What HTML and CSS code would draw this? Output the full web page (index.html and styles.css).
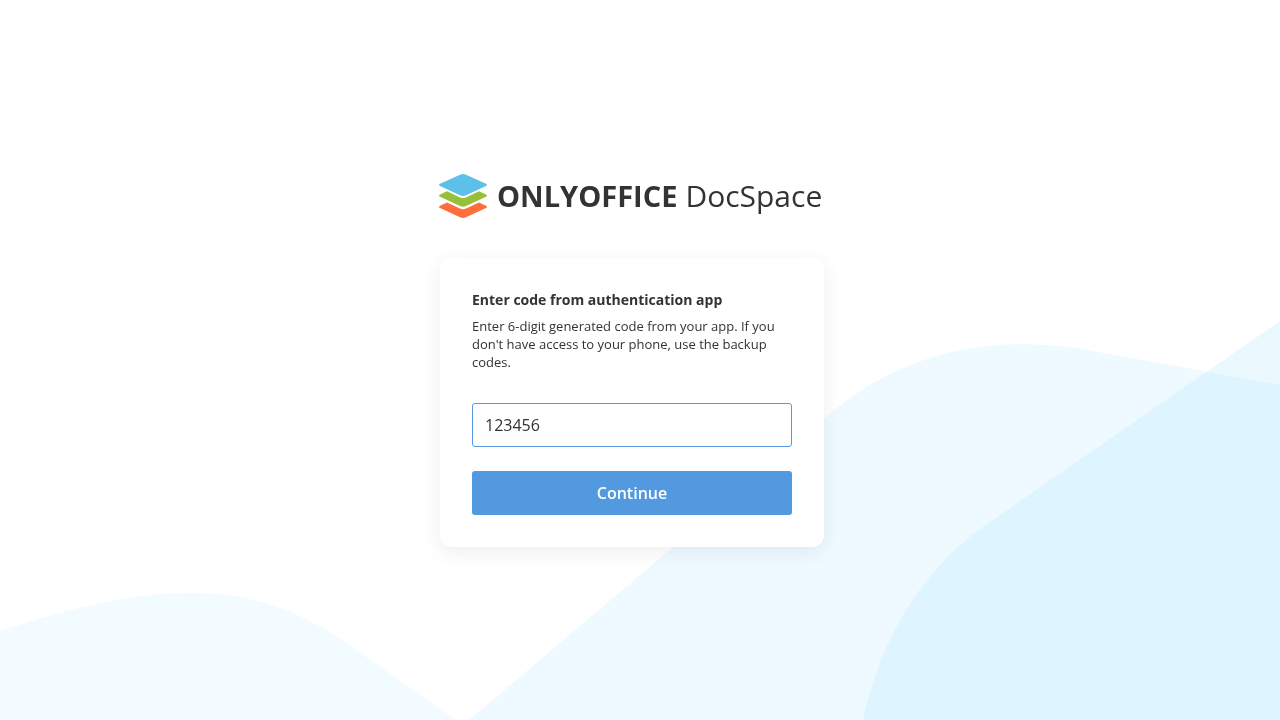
FILE: index.html
```html
<!DOCTYPE html>
<html lang="en">
<head>
<meta charset="utf-8">
<meta name="viewport" content="width=device-width, initial-scale=1">
<title>ONLYOFFICE DocSpace</title>
<link rel="stylesheet" href="styles.css">
</head>
<body class="page">
<svg class="backdrop" viewBox="0 0 1280 720" preserveAspectRatio="xMidYMax slice" aria-hidden="true">
  <path class="wave-left" d="M0 631C78 606 131 593 192 593C246 593 292 607 342 640L456 720H0Z"/>
  <path class="wave-center" d="M469 720L824 419C890 360 974 334 1076 348L1280 385V720Z"/>
  <path class="wave-right" d="M863 720C880 637 925 567 984 526L1280 321V720Z"/>
</svg>
<main class="auth">
  <div class="logo">
    <svg class="logo-mark" viewBox="0 0 48 44" aria-hidden="true">
      <path fill="#ff6f3d" d="M21 43.2L1 34.1Q-1 33 1 31.8L8 28.6L21 34.6Q24 36 27 34.6L40 28.6L47 31.8Q49 33 47 34.1L27 43.2Q24 44.6 21 43.2Z"/>
      <path fill="#95c038" d="M21 32.1L1 22.8Q-1 21.7 1 20.6L8 17.3L21 23.4Q24 24.8 27 23.4L40 17.3L47 20.6Q49 21.7 47 22.8L27 32.1Q24 33.4 21 32.1Z"/>
      <path fill="#5dc0e8" d="M21 21.2L1 11.9Q-1 10.8 1 9.7L21 .8Q24 -.6 27 .8L47 9.7Q49 10.8 47 11.9L27 21.2Q24 22.6 21 21.2Z"/>
    </svg>
    <div class="logo-text"><span class="logo-brand">ONLYOFFICE</span><span class="logo-product">DocSpace</span></div>
  </div>
  <form class="card">
    <h1 class="card-title">Enter code from authentication app</h1>
    <p class="card-text" id="hint">Enter 6-digit generated code from your app. If you don't have access to your phone, use the backup codes.</p>
    <input class="code-input" type="text" inputmode="numeric" value="123456" aria-label="Authentication code" aria-describedby="hint">
    <button class="submit" type="button">Continue</button>
  </form>
</main>
</body>
</html>
```
FILE: styles.css
```css
* {
  box-sizing: border-box;
}

.page {
  margin: 0;
  min-height: 100vh;
  background: #fff;
  color: #333;
  font-family: "Open Sans", sans-serif;
}

.backdrop {
  position: fixed;
  inset: 0;
  z-index: -1;
  width: 100%;
  height: 100%;
}

.wave-left {
  fill: #f2fbff;
}

.wave-center {
  fill: #eefaff;
}

.wave-right {
  fill: rgb(182 235 255 / 28%);
}

.auth {
  display: flex;
  flex-direction: column;
  align-items: center;
  gap: 40px;
  padding: 174px 16px 32px 0;
}

.logo {
  display: flex;
  align-items: center;
  gap: 10px;
  width: 100%;
  max-width: 386px;
}

.logo-mark {
  flex: none;
  width: 48px;
  height: 44px;
}

.logo-text {
  display: flex;
  align-items: baseline;
  gap: 8px;
  font-size: 30px;
  line-height: 42px;
  white-space: nowrap;
}

.logo-brand {
  font-size: 29px;
  font-weight: 700;
}

.card {
  width: 100%;
  max-width: 384px;
  padding: 32px;
  border-radius: 12px;
  background: #fff;
  box-shadow: 0 5px 20px rgb(4 15 27 / 7%);
}

.card-title {
  margin: 0 0 8px;
  font-size: 14px;
  font-weight: 700;
  line-height: 19px;
}

.card-text {
  margin: 0 0 32px;
  font-size: 13px;
  line-height: 18px;
}

.code-input {
  display: block;
  width: 100%;
  height: 44px;
  margin-bottom: 24px;
  padding: 0 12px;
  border: 1px solid #5299e0;
  border-radius: 3px;
  outline: none;
  background: #fff;
  color: #333;
  font: 16px "Open Sans", sans-serif;
}

.submit {
  display: block;
  width: 100%;
  height: 44px;
  border: 0;
  border-radius: 3px;
  background: #5299e0;
  color: #fff;
  font: 600 16px "Open Sans", sans-serif;
  cursor: pointer;
}
```
